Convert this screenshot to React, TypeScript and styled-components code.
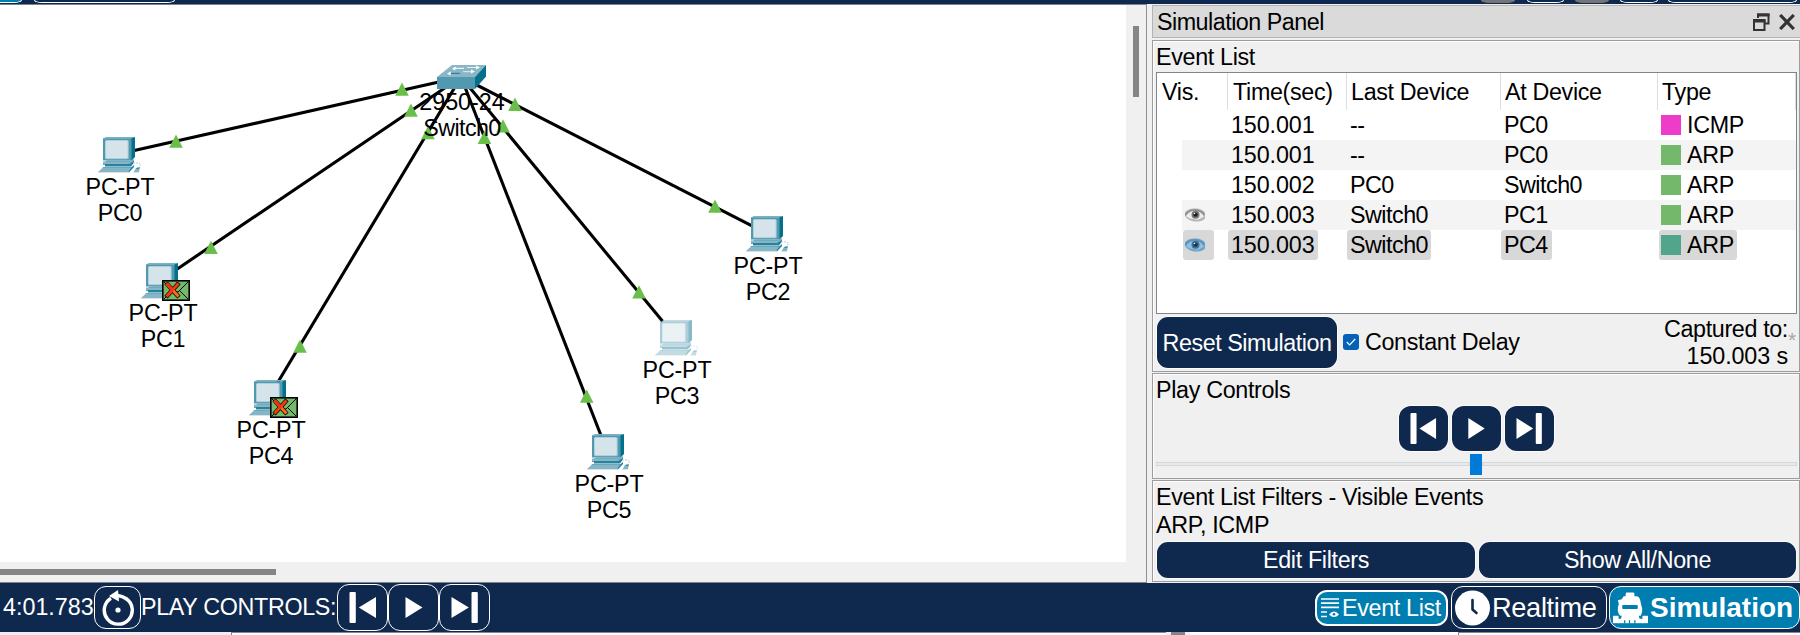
import React from "react";
import styled, { createGlobalStyle } from "styled-components";

const NAVY = "#0f284d";
const TEAL = "#007eb0";

const GlobalStyle = createGlobalStyle`
  * { box-sizing: border-box; }
  body { margin: 0; overflow: hidden; background: #efefef; }
`;

const Window = styled.div`
  width: 1800px;
  height: 635px;
  display: flex;
  flex-direction: column;
  overflow: hidden;
  background: #efefef;
  color: #000;
  font-family: "Liberation Sans", Arial, sans-serif;
  font-size: 23.3px;
  line-height: 26px;
  white-space: nowrap;
`;

const Text = styled.span<{ $ls?: number; $lh?: number }>`
  display: block;
  letter-spacing: ${(p) => p.$ls ?? -0.33}px;
  ${(p) => (p.$lh ? `line-height: ${p.$lh}px;` : "")}
`;

/* ---------- top edge of the toolbar ---------- */
const TopBar = styled.div`
  height: 4px;
  flex: none;
  display: flex;
  background: ${NAVY};
`;
const TopTab = styled.div<{ $w: number; $gap: number; $fill?: string; $line?: string }>`
  width: ${(p) => p.$w}px;
  height: 3px;
  margin-left: ${(p) => p.$gap}px;
  flex: none;
  background: ${(p) => p.$fill ?? "transparent"};
  border: 1px solid ${(p) => p.$line ?? "#fff"};
  border-top: 0;
  border-radius: 0 0 8px 8px / 0 0 3px 3px;
`;

/* ---------- middle ---------- */
const Middle = styled.div`
  height: 579px;
  flex: none;
  display: flex;
`;
const Workspace = styled.div`
  width: 1147px;
  display: flex;
  flex-direction: column;
  border-top: 1px solid #7d828b;
  border-right: 1px solid #8b8f96;
  border-bottom: 1px solid #7d828b;
`;
const WorkspaceMain = styled.div`
  height: 557px;
  display: flex;
`;
const Canvas = styled.div`
  position: relative;
  width: 1126px;
  height: 557px;
  background: #fff;
  overflow: hidden;
`;
const VScroll = styled.div`
  flex: 1;
  padding: 21px 0 0 7px;
  background: #f0f0f0;
`;
const VThumb = styled.div`
  width: 6px;
  height: 71px;
  background: #858585;
`;
const HScroll = styled.div`
  flex: 1;
  padding-top: 7px;
  background: #f0f0f0;
`;
const HThumb = styled.div`
  width: 276px;
  height: 6px;
  background: #858585;
`;
const Links = styled.svg`
  position: absolute;
  left: 0;
  top: 0;
`;
const Device = styled.div<{ $x: number; $y: number; $gap: number; $faded?: boolean }>`
  position: absolute;
  left: ${(p) => p.$x - 60}px;
  top: ${(p) => p.$y}px;
  width: 120px;
  display: flex;
  flex-direction: column;
  align-items: center;
  & > svg { margin-bottom: ${(p) => p.$gap}px; opacity: ${(p) => (p.$faded ? 0.48 : 1)}; }
`;
const Envelope = styled.svg`
  position: absolute;
  left: 59px;
  top: 17px;
  && { margin: 0; }
`;

/* ---------- simulation panel ---------- */
const Panel = styled.div`
  flex: 1;
  display: flex;
  flex-direction: column;
  padding: 1px 0 1px 5px;
  gap: 1px;
  background: #f0f0f0;
`;
const PanelTitle = styled.div`
  height: 33px;
  margin-bottom: 1px;
  display: flex;
  align-items: center;
  justify-content: space-between;
  padding: 0 5px 0 4px;
  background: #dadada;
  border: 1px solid #b4b4b4;
  border-right: 0;
`;
const TitleIcons = styled.div`
  display: flex;
  align-items: center;
  gap: 9px;
`;
const Group = styled.div<{ $h: number }>`
  height: ${(p) => p.$h}px;
  flex: none;
  display: flex;
  flex-direction: column;
  padding: 3px 2px 0 3px;
  border: 1px solid #9c9c9c;
  box-shadow: inset 1px 1px 0 #fff;
`;
const Table = styled.div`
  height: 242px;
  flex: none;
  margin-top: 2px;
  background: #fff;
  border: 1px solid #7f858d;
`;
const HeadRow = styled.div`
  height: 37px;
  display: grid;
  grid-template-columns: 71px 119px 154px 157px 1fr;
`;
const HeadCell = styled.div<{ $pad: number }>`
  padding: 6px 0 0 ${(p) => p.$pad}px;
  border-right: 1px solid #dedede;
`;
const Row = styled.div<{ $striped?: boolean }>`
  height: 30px;
  margin-left: 25px;
  display: grid;
  grid-template-columns: 45px 119px 154px 158px 1fr;
  background: ${(p) => (p.$striped ? "#f4f4f4" : "transparent")};
`;
const Cell = styled.div<{ $w: number; $on?: boolean; $pad?: number }>`
  height: 30px;
  width: ${(p) => p.$w}px;
  margin-left: 1px;
  padding: 0 0 1px ${(p) => p.$pad ?? 3}px;
  display: flex;
  align-items: center;
  border-radius: 3px;
  background: ${(p) => (p.$on ? "#d8d8d8" : "transparent")};
`;
const Swatch = styled.div<{ $c: string }>`
  width: 20px;
  height: 20px;
  flex: none;
  margin: 1px 6px 0 0;
  background: ${(p) => p.$c};
`;
const ResetRow = styled.div`
  display: flex;
  align-items: flex-start;
  padding: 3px 0 0 1px;
`;
const NavyButton = styled.button<{ $w: number; $h: number; $r?: number }>`
  width: ${(p) => p.$w}px;
  height: ${(p) => p.$h}px;
  flex: none;
  padding: 0;
  display: flex;
  align-items: center;
  justify-content: center;
  border: 0;
  border-radius: ${(p) => p.$r ?? 11}px;
  background: ${NAVY};
  box-shadow: 0 0 0 1px #fbfbfb;
  color: #fff;
  font: inherit;
`;
const CheckBox = styled.div`
  width: 16px;
  height: 16px;
  margin: 17px 6px 0 6px;
  display: flex;
  align-items: center;
  justify-content: center;
  border-radius: 3px;
  background: #0560b8;
`;
const CheckText = styled(Text)`
  margin-top: 12px;
`;
const Captured = styled.div`
  margin-left: auto;
  margin-top: -1px;
  text-align: right;
  line-height: 27px;
`;
const Star = styled.div`
  width: 9px;
  margin-top: 10px;
  color: #a6a6a6;
  font-size: 21px;
`;
const PlayRow = styled.div`
  display: flex;
  gap: 4px;
  margin: 3px 0 0 243px;
`;
const Slider = styled.div`
  height: 21px;
  margin-top: 3px;
  display: flex;
  align-items: center;
`;
const Track = styled.div<{ $w?: number }>`
  height: 4px;
  margin-bottom: 2px;
  ${(p) => (p.$w ? `width: ${p.$w}px;` : "flex: 1;")}
  background: #e7eaea;
  border: 1px solid #d4d8d8;
`;
const Handle = styled.div`
  width: 12px;
  height: 21px;
  background: #007ad9;
`;
const FilterRow = styled.div`
  display: flex;
  gap: 4px;
  margin: 3px 0 0 1px;
`;

/* ---------- bottom bar ---------- */
const BottomBar = styled.div`
  height: 49px;
  flex: none;
  display: flex;
  align-items: center;
  padding-left: 3px;
  background: ${NAVY};
  color: #fff;
`;
const Fixed = styled.div<{ $w: number }>`
  width: ${(p) => p.$w}px;
  flex: none;
  padding-bottom: 2px;
`;
const OutlineButton = styled.button<{ $w: number; $h: number; $fill?: string; $b?: number; $gap?: number }>`
  width: ${(p) => p.$w}px;
  height: ${(p) => p.$h}px;
  flex: none;
  margin-left: ${(p) => p.$gap ?? 0}px;
  padding: 0;
  display: flex;
  align-items: center;
  justify-content: center;
  border: ${(p) => p.$b ?? 1}px solid #fff;
  border-radius: 12px;
  background: ${(p) => p.$fill ?? NAVY};
  color: #fff;
  font: inherit;
`;
const ModeButton = styled(OutlineButton)<{ $space: number }>`
  justify-content: flex-start;
  padding-left: 3px;
  gap: ${(p) => p.$space}px;
`;
const Modes = styled.div`
  margin-left: auto;
  display: flex;
  align-items: center;
`;
const Big = styled(Text)<{ $bold?: boolean }>`
  font-size: ${(p) => (p.$bold ? 28 : 27.2)}px;
  font-weight: ${(p) => (p.$bold ? 700 : 400)};
  line-height: 30px;
`;

const Below = styled.div`
  flex: 1;
  display: flex;
`;
const BelowPart = styled.div<{ $w: number; $bg: string; $edge?: boolean }>`
  width: ${(p) => p.$w}px;
  flex: none;
  background: ${(p) => p.$bg};
  border-top: 1px solid ${(p) => (p.$edge ? "#85898f" : p.$bg)};
  border-left: 1px solid ${(p) => (p.$edge ? "#85898f" : p.$bg)};
`;

const PcIcon = () => (
  <svg width="44" height="36" viewBox="0 0 44 36">
    <polygon points="5,1.5 8,0 37,0 34,1.5" fill="#7fb0c2" />
    <polygon points="33,1.5 37,0 37,20 33,24" fill="#04708c" />
    <rect x="5" y="1.3" width="28.5" height="22.2" fill="#5199b0" />
    <rect x="7" y="3" width="24" height="19.3" rx="1.5" fill="#8fbccb" />
    <rect x="7.5" y="3.4" width="22.3" height="18" rx="1" fill="#d4e4ea" />
    <polygon points="9,23.5 33,23.5 35,22 35,25 31,28 5,28 5,26" fill="#5f9fb5" />
    <polygon points="5,24.6 32,24.6 36,22 36,24 32,27 5,27" fill="#86b5c5" />
    <polygon points="7,27 31,27 36,23.8 36,25.5 33,29.5 7,29.5" fill="#24849f" />
    <polygon points="5,30.4 33,30.4 30,35 0,35" fill="#86b5c5" />
    <polygon points="5,30 33,30 34,30.8 4.5,30.8" fill="#5199b0" />
    <polygon points="33,30.4 36,28 36,30 31,35.4 30,35" fill="#24849f" />
    <path d="M35 26h6l2 1.5-3 3" fill="none" stroke="#b5d0da" strokeWidth="1" strokeDasharray="2 1" />
    <polygon points="38,31 42,30 41,35 35.5,35.5" fill="#86b5c5" />
    <path d="M38.5 31.5l3-.5" stroke="#24849f" strokeWidth="1" />
    <path d="M0 35.5h31M35 35.5h6" stroke="#d4e4ea" strokeWidth="1" />
  </svg>
);

const SwitchIcon = () => (
  <svg width="50" height="24" viewBox="0 0 50 24">
    <polygon points="0,12 15,0 49,0 38,12" fill="#8ab6c6" />
    <rect x="0" y="12" width="38" height="12" fill="#5199b0" />
    <polygon points="38,12 49,0 49,11.5 38,24" fill="#04708c" />
    <g strokeWidth="1.2" fill="none">
      <path d="M17 3.4h10M30 2.5h11" stroke="#e8f1f4" />
      <path d="M12 8.4h11" stroke="#24849f" />
      <path d="M26 6.6h9" stroke="#d4e4ea" />
    </g>
    <g fill="#fff">
      <polygon points="15,3.5 19,1.5 18,5.5" />
      <polygon points="43,2.5 39,.6 39,4.6" />
      <polygon points="10,8.5 14,6.5 13.5,10.5" />
      <polygon points="38,6.6 34,4.6 34,8.6" />
    </g>
  </svg>
);

const EnvelopeIcon = () => (
  <Envelope width="28" height="21" viewBox="0 0 28 21">
    <rect x=".8" y=".8" width="26.4" height="19.4" fill="#74b86b" stroke="#000" strokeWidth="1.6" />
    <path d="M2 2l11 10h3L26 2M2 19l6-6M26 19l-8-8" fill="none" stroke="#000" strokeWidth="1" />
    <path d="M5.500 4.500l10 11M15.500 4.500L5.500 15.500" stroke="#000" strokeWidth="4.400" strokeLinecap="square" />
    <path d="M5.500 4.500l10 11" stroke="#ff6a10" strokeWidth="3" strokeLinecap="square" />
    <path d="M15.500 4.500L5.500 15.500" stroke="#f53a12" strokeWidth="3" strokeLinecap="square" />
    <path d="M5.500 4.500l4 4.400" stroke="#ee3312" strokeWidth="3" strokeLinecap="square" />
  </Envelope>
);

const EyeIcon = ({ blue }: { blue?: boolean }) => {
  const c = blue
    ? { lid: "#5f8fb5", white: "#92bfe0", iris: "#3f7099", pupil: "#14364f", shade: "#6fa3c9" }
    : { lid: "#8a8a8a", white: "#ececec", iris: "#777", pupil: "#1c1c1c", shade: "#b4b4b4" };
  return (
    <svg width="20" height="14" viewBox="0 0 20 14">
      <path d="M0 4C3 1 7 0 11 .5c4 .2 7 1.500 9 4v6c-2 2-5 3.500-9 3C6 13.500 2 11 0 8z" fill={c.shade} />
      <path d="M1 8c3-4 6-5.500 9.500-5 4 .3 7 2.500 8.500 5.500-3 2.500-6 3.500-9 3C6 11.200 3 10 1 8z" fill={c.white} />
      <circle cx="10.500" cy="6.800" r="4" fill={c.iris} />
      <circle cx="10.500" cy="6.600" r="2.200" fill={c.pupil} />
      <circle cx="9.500" cy="5.500" r=".8" fill="#fff" />
      <path d="M0 7.500C3 3 6 1.700 10.500 2c4 .2 7 2.500 8.800 5" fill="none" stroke={c.lid} strokeWidth="1.300" />
    </svg>
  );
};

type Kind = "prev" | "play" | "next";
const PlayIcon = ({ kind, big }: { kind: Kind; big?: boolean }) => (
  <svg width={big ? 28 : 27} height="31" viewBox="0 0 28 31" preserveAspectRatio="none" fill="#fff">
    {kind === "prev" && (
      <>
        <rect x="0.500" y="0" width="6.300" height="31" rx="1" />
        <polygon points="9.800,15.500 27,5 27,26" />
      </>
    )}
    {kind === "play" && <polygon points="5.500,5 22.500,15.500 5.500,26" />}
    {kind === "next" && (
      <>
        <polygon points="0.500,5 17.800,15.500 0.500,26" />
        <rect x="20.500" y="0" width="6.300" height="31" rx="1" />
      </>
    )}
  </svg>
);

const ResetIcon = () => (
  <svg width="34" height="36" viewBox="0 0 34 36">
    <path d="M10 8.200A14 14 0 1 0 25 8.500" fill="none" stroke="#fff" strokeWidth="3.400" />
    <path d="M14 5.500c4 0 8 .8 11.500 3.500" fill="none" stroke="#fff" strokeWidth="3.600" />
    <polygon points="8,6 17,0 18,11.500" fill="#fff" />
    <circle cx="17" cy="20" r="2.600" fill="#fff" />
  </svg>
);

const ListIcon = () => (
  <svg width="20" height="20" viewBox="0 0 20 20" fill="none" stroke="#fff" strokeWidth="1.700">
    <path d="M1 1h18M1 5.200h18M1 9.400h18M1 14h6M1 18.500h6" />
    <path d="M9 16.500q5-6 10 0q-5 5-10 0z" fill="#fff" stroke="none" />
    <circle cx="14" cy="16.300" r="1.300" fill={TEAL} stroke="none" />
  </svg>
);

const ClockIcon = () => (
  <svg width="35" height="36" viewBox="0 0 35 36">
    <circle cx="17.500" cy="18" r="17.500" fill="#fff" />
    <path d="M17.500 10v9.500l4 3.500" fill="none" stroke={NAVY} strokeWidth="2.600" strokeLinecap="round" strokeLinejoin="round" />
  </svg>
);

const TrainIcon = () => (
  <svg width="35" height="32" viewBox="0 0 36 32">
    <path
      d="M13 1.500q0-1.500 1.500-1.500h6q1.500 0 1.500 1.500V4h2q3 0 4 4l1 5q1.500 3 1 7l-1.500 4h-2l2 7.500H7L9 24H6.500L5 19q-.5-4 1-7l-1-4 4-1 2-3h2z"
      fill="#fff"
    />
    <rect x="9.500" y="13" width="16" height="4" rx="1" fill={TEAL} />
    <rect x="0" y="24" width="6" height="7.600" fill="#fff" />
    <rect x="30" y="24" width="6" height="7.600" fill="#fff" />
    <rect x="5" y="27" width="26" height="4.600" fill="#fff" />
    <path d="M6.500 23v4M29.500 23v4M12 31.600v-3M17 31.600v-3M22.500 31.600v-3" stroke={TEAL} strokeWidth="1.300" />
  </svg>
);

const HUB = { x: 461, y: 77 };
const PCS = [
  { name: "PC0", x: 118, y: 154, end: [132, 151] },
  { name: "PC1", x: 161, y: 280, end: [174, 271.2], mail: true },
  { name: "PC4", x: 269, y: 397, end: [278, 382], mail: true },
  { name: "PC5", x: 607, y: 451, end: [601, 435.500] },
  { name: "PC3", x: 675, y: 337, end: [662.6, 321.300], faded: true },
  { name: "PC2", x: 766, y: 233, end: [753, 226.300] },
];
const ARROWS = [
  [402, 82.5], [176, 134.5], [411, 103.5], [211, 240.8], [428, 126], [300, 339.5],
  [484.5, 130.7], [586.7, 389.5], [503, 119.3], [639, 285.3], [515, 97.6], [715, 199.5],
];
const EVENTS = [
  { time: "150.001", last: "--", at: "PC0", type: "ICMP", color: "#ee3cca" },
  { time: "150.001", last: "--", at: "PC0", type: "ARP", color: "#74b86b" },
  { time: "150.002", last: "PC0", at: "Switch0", type: "ARP", color: "#74b86b" },
  { time: "150.003", last: "Switch0", at: "PC1", type: "ARP", color: "#74b86b", eye: true },
  { time: "150.003", last: "Switch0", at: "PC4", type: "ARP", color: "#52a58a", eye: true, on: true },
];
const KINDS: Kind[] = ["prev", "play", "next"];

export default function App() {
  return (
    <Window>
      <GlobalStyle />
      <TopBar>
        <TopTab $w={32} $gap={-10} $fill={TEAL} />
        <TopTab $w={141} $gap={12} />
        <TopTab $w={34} $gap={1306} $fill="#757575" $line="#757575" />
        <TopTab $w={37} $gap={12} />
        <TopTab $w={34} $gap={11} $fill="#757575" $line="#757575" />
        <TopTab $w={38} $gap={11} />
        <TopTab $w={129} $gap={10} />
      </TopBar>

      <Middle>
        <Workspace>
          <WorkspaceMain>
            <Canvas>
              <Links width="1126" height="557" viewBox="0 5 1126 557">
                {PCS.map((p) => (
                  <line key={p.name} x1={HUB.x} y1={HUB.y} x2={p.end[0]} y2={p.end[1]} stroke="#000" strokeWidth="3.100" />
                ))}
                {ARROWS.map(([x, y]) => (
                  <polygon key={x} points={`${x},${y} ${x + 6.8},${y + 13.3} ${x - 6.8},${y + 13.3}`} fill="#6abf4b" />
                ))}
              </Links>
              <Device $x={462} $y={60} $gap={0}>
                <SwitchIcon />
                <Text $ls={0}>2950-24</Text>
                <Text $ls={-0.6}>Switch0</Text>
              </Device>
              {PCS.map((p) => (
                <Device key={p.name} $x={p.x + 2} $y={p.y - 22} $gap={1} $faded={p.faded}>
                  <PcIcon />
                  {p.mail && <EnvelopeIcon />}
                  <Text $ls={-0.2}>PC-PT</Text>
                  <Text>{p.name}</Text>
                </Device>
              ))}
            </Canvas>
            <VScroll>
              <VThumb />
            </VScroll>
          </WorkspaceMain>
          <HScroll>
            <HThumb />
          </HScroll>
        </Workspace>

        <Panel>
          <PanelTitle>
            <Text $ls={-0.5}>Simulation Panel</Text>
            <TitleIcons>
              <svg width="17" height="18" viewBox="0 0 17 18" fill="none" stroke="#333">
                <path d="M5 5V1.500h10.500v9H12" strokeWidth="2" />
                <path d="M4 2h12.500" strokeWidth="3" />
                <rect x="1" y="7" width="10.500" height="10" strokeWidth="2" />
                <path d="M0 8h12.500" strokeWidth="3" />
              </svg>
              <svg width="16" height="16" viewBox="0 0 16 16" stroke="#333" strokeWidth="3.200">
                <path d="M1.200 1l13.600 14M14.800 1L1.200 15" />
              </svg>
            </TitleIcons>
          </PanelTitle>

          <Group $h={332}>
            <Text>Event List</Text>
            <Table>
              <HeadRow>
                <HeadCell $pad={5}><Text>Vis.</Text></HeadCell>
                <HeadCell $pad={5}><Text>Time(sec)</Text></HeadCell>
                <HeadCell $pad={4}><Text>Last Device</Text></HeadCell>
                <HeadCell $pad={4}><Text>At Device</Text></HeadCell>
                <HeadCell $pad={4}><Text>Type</Text></HeadCell>
              </HeadRow>
              {EVENTS.map((e, i) => (
                <Row key={i} $striped={i % 2 === 1}>
                  <Cell $w={31} $on={e.on} $pad={2}>{e.eye && <EyeIcon blue={e.on} />}</Cell>
                  <Cell $w={90} $on={e.on}><Text $ls={-0.1}>{e.time}</Text></Cell>
                  <Cell $w={84} $on={e.on}><Text $ls={-0.5}>{e.last}</Text></Cell>
                  <Cell $w={e.on ? 51 : 100} $on={e.on}><Text $ls={-0.5}>{e.at}</Text></Cell>
                  <Cell $w={78} $on={e.on} $pad={2}>
                    <Swatch $c={e.color} />
                    <Text>{e.type}</Text>
                  </Cell>
                </Row>
              ))}
            </Table>
            <ResetRow>
              <NavyButton $w={180} $h={51}><Text $ls={-0.45}>Reset Simulation</Text></NavyButton>
              <CheckBox>
                <svg width="10" height="8" viewBox="0 0 10 8" fill="none" stroke="#fff" strokeWidth="1.200">
                  <path d="M.8 4l2.800 2.800L9.200 1" />
                </svg>
              </CheckBox>
              <CheckText>Constant Delay</CheckText>
              <Captured>
                <Text $ls={-0.35}>Captured to:</Text>
                <Text $ls={-0.1}>150.003 s</Text>
              </Captured>
              <Star>*</Star>
            </ResetRow>
          </Group>

          <Group $h={106}>
            <Text>Play Controls</Text>
            <PlayRow>
              {KINDS.map((k) => (
                <NavyButton key={k} $w={49} $h={45} $r={12}><PlayIcon kind={k} /></NavyButton>
              ))}
            </PlayRow>
            <Slider>
              <Track $w={314} />
              <Handle />
              <Track />
            </Slider>
          </Group>

          <Group $h={102}>
            <Text $lh={27}>Event List Filters - Visible Events</Text>
            <Text $lh={28}>ARP, ICMP</Text>
            <FilterRow>
              <NavyButton $w={318} $h={36}><Text>Edit Filters</Text></NavyButton>
              <NavyButton $w={317} $h={36}><Text>Show All/None</Text></NavyButton>
            </FilterRow>
          </Group>
        </Panel>
      </Middle>

      <BottomBar>
        <Fixed $w={91}><Text $ls={0}>4:01.783</Text></Fixed>
        <OutlineButton $w={47} $h={43}><ResetIcon /></OutlineButton>
        <Fixed $w={196}><Text>PLAY CONTROLS:</Text></Fixed>
        {KINDS.map((k) => (
          <OutlineButton key={k} $w={51} $h={47}><PlayIcon kind={k} big /></OutlineButton>
        ))}
        <Modes>
          <ModeButton $w={133} $h={36} $b={2} $space={2} $fill={TEAL}>
            <ListIcon />
            <Text>Event List</Text>
          </ModeButton>
          <ModeButton $w={156} $h={43} $gap={3} $space={2}>
            <ClockIcon />
            <Big>Realtime</Big>
          </ModeButton>
          <ModeButton $w={191} $h={43} $gap={2} $space={2} $fill={TEAL}>
            <TrainIcon />
            <Big $bold $ls={0}>Simulation</Big>
          </ModeButton>
        </Modes>
      </BottomBar>

      <Below>
        <BelowPart $w={231} $bg="#efefef" />
        <BelowPart $w={935} $bg="#fff" $edge />
        <BelowPart $w={5} $bg="#efefef" />
        <BelowPart $w={14} $bg="#858585" />
        <BelowPart $w={5} $bg="#efefef" />
        <BelowPart $w={268} $bg="#fff" />
        <BelowPart $w={342} $bg="#fff" $edge />
      </Below>
    </Window>
  );
}
